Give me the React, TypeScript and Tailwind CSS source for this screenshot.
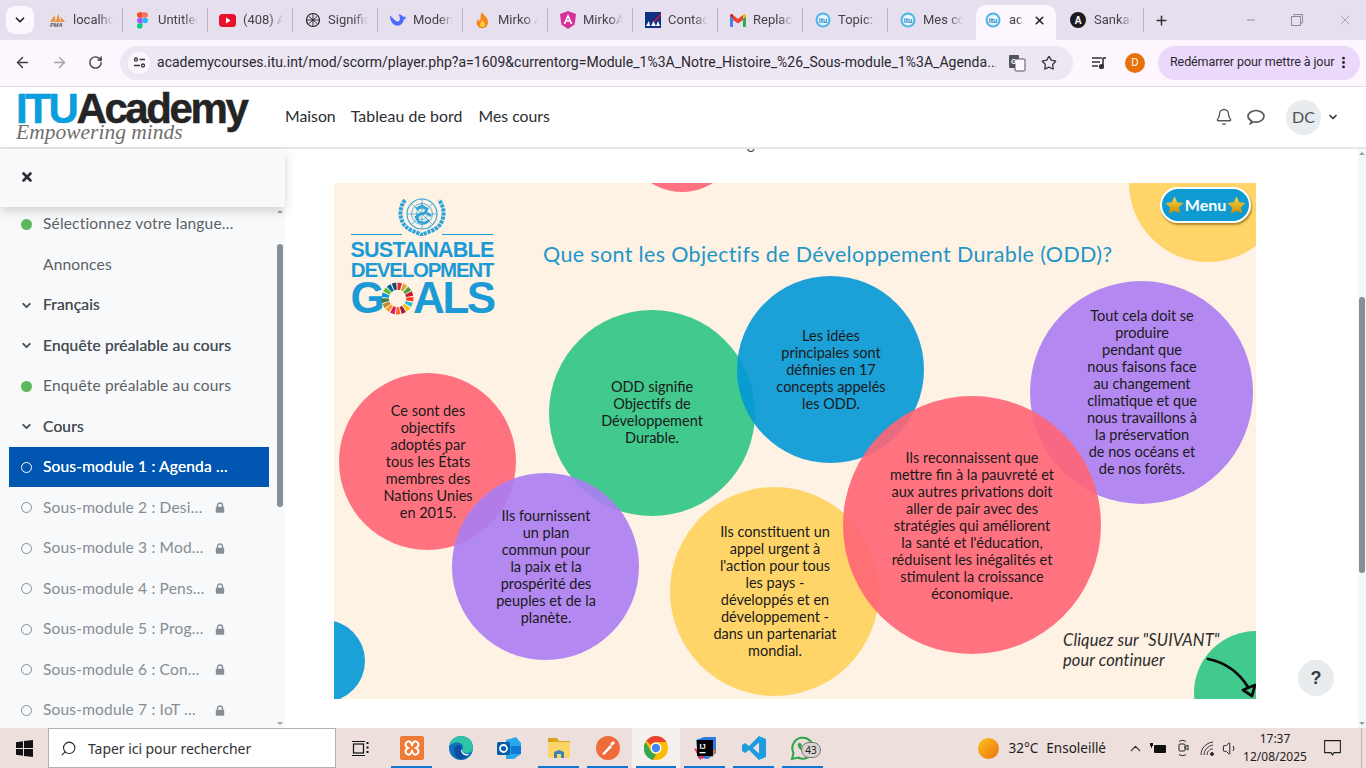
import React from "react";
import { ArrowLeft, ArrowRight, RotateCw, Star, ChevronDown, X, Plus, Minus, Bell, Search, ChevronUp, Volume1, MoreVertical } from "lucide-react";

const Yt = () => (<svg width="17" height="13" viewBox="0 0 17 13"><rect width="17" height="13" rx="3.5" fill="#e8112d" /><path d="M7 3.6v5.8l4.6-2.9z" fill="#fff" /></svg>);
const Pma = () => (<svg width="18" height="16" viewBox="0 0 18 16"><path d="M1 10 6 3l1 7zM7 10l3-9 2 9zM12 10l1-5 4 5z" fill="#e8963a" /><text x="1" y="15.5" fontSize="6" fontWeight="700" fontStyle="italic" fill="#555" fontFamily="Liberation Sans">PMA</text></svg>);
const Figma = () => (<svg width="11" height="17" viewBox="0 0 12 18"><circle cx="9" cy="9" r="3" fill="#1abcfe" /><path d="M0 15a3 3 0 0 1 3-3h3v3a3 3 0 0 1-6 0" fill="#0acf83" /><path d="M0 9a3 3 0 0 1 3-3h3v6H3a3 3 0 0 1-3-3" fill="#a259ff" /><path d="M0 3a3 3 0 0 1 3-3h3v6H3a3 3 0 0 1-3-3" fill="#f24e1e" /><path d="M6 0h3a3 3 0 0 1 0 6H6z" fill="#ff7262" /></svg>);
const Gpt = () => (<svg width="16" height="16" viewBox="0 0 16 16" fill="none" stroke="#222" strokeWidth="1.2"><circle cx="8" cy="8" r="6.5" /><path d="M4 4.5l8 7M12 4.5l-8 7M8 1.5v13M2 8h12" strokeWidth=".9" /></svg>);
const Deep = () => (<svg width="18" height="14" viewBox="0 0 18 14"><path d="M1 2c0 7 4 11 8 11 4 0 6-3 6.500-6L18 5l-1-2-1.500 1C14 2 12 1 10 1c2 3 2 6 .5 7.500C8 9.500 5 6 1 2z" fill="#4d6bfe" /></svg>);
const Flame = () => (<svg width="13" height="17" viewBox="0 0 13 17"><path d="M6 0c1 3 6 5 6 10a5.700 5.700 0 0 1-11.500 1c0-2 1-3 2-4 0 1 .5 2 1.500 2C5 6 4 3 6 0z" fill="#f5871f" /><path d="M6.500 8c.5 2 2.500 3 2.500 5a2.600 2.600 0 0 1-5 0c0-2 2-3 2.500-5z" fill="#ffd23f" /></svg>);
const Ang = () => (<svg width="16" height="18" viewBox="0 0 16 18"><path d="M8 0l8 3-1.300 10.500L8 18l-6.700-4.500L0 3z" fill="#d6309b" /><path d="M8 3 3.500 13h1.700l1-2.300h3.600l1 2.300h1.700zM7 9.200 8 6.800l1 2.400z" fill="#fff" /></svg>);
const Axa = () => (<svg width="16" height="16" viewBox="0 0 16 16"><rect width="16" height="16" fill="#103184" /><path d="M9 9 16 1v2l-6 7z" fill="#e8112d" /><path d="M1 14l3-5 1 5zM6 14l2.500-5 2.500 5zM11 14l2-5 2 5z" fill="#fff" /></svg>);
const Gmail = () => (<svg width="16" height="13" viewBox="0 0 16 13"><path d="M0 2v10a1 1 0 0 0 1 1h2V5z" fill="#4285f4" /><path d="M16 2v10a1 1 0 0 1-1 1h-2V5z" fill="#34a853" /><path d="M3 6V1L8 5l5-4v5L8 9.500z" fill="#ea4335" /><path d="M0 2c0-2 2-2.500 3-1.500V5z" fill="#c5221f" /><path d="M16 2c0-2-2-2.500-3-1.500V5z" fill="#fbbc04" /></svg>);
const Itu = () => (<svg width="16" height="16" viewBox="0 0 16 16"><circle cx="8" cy="8" r="7.500" fill="#49b4e6" /><circle cx="8" cy="8" r="5.500" fill="#e8f5fc" /><text x="8" y="10.500" fontSize="7" fontWeight="700" textAnchor="middle" fill="#1a86c8" fontFamily="Liberation Sans">itu</text></svg>);
const AIcon = () => (<svg width="16" height="16" viewBox="0 0 16 16"><circle cx="8" cy="8" r="8" fill="#1b1b1f" /><text x="8" y="11.500" fontSize="10" fontWeight="700" textAnchor="middle" fill="#fff" fontFamily="Liberation Sans">A</text></svg>);

const tabs: [React.ReactNode, string][] = [
  [<Pma />, "localho"], [<Figma />, "Untitled"], [<Yt />, "(408) A"], [<Gpt />, "Signific"], [<Deep />, "Modern"],
  [<Flame />, "Mirko A"], [<Ang />, "MirkoA"], [<Axa />, "Contact"], [<Gmail />, "Replace"], [<Itu />, "Topic: F"], [<Itu />, "Mes cou"],
];

const fade = "[mask-image:linear-gradient(90deg,#000_65%,transparent)]";

const Tab = ({ icon, label, last }: { icon: React.ReactNode; label: string; last?: boolean }) => (
  <div className={`w-[85px] h-[24px] flex items-center pl-[11px] shrink-0 ${last ? "" : "border-r border-[#b9b3c2]"}`}>
    <span className="w-[17px] flex justify-center shrink-0">{icon}</span>
    <span className={`ml-[7px] w-[40px] overflow-hidden whitespace-nowrap text-[13px] text-[#45424c] font-['Roboto',sans-serif] ${fade}`}>{label}</span>
  </div>
);

const TabBar = () => (
  <div className="h-[40px] bg-[#e6dfee] flex items-end shrink-0">
    <div className="w-[28px] h-[28px] ml-[6px] mb-[6px] bg-[#fdf6fe] rounded-[9px] flex items-center justify-center"><ChevronDown size={14} strokeWidth={3} color="#222" /></div>
    <div className="flex items-center h-[35px] ml-[4px] pb-[5px]">
      {tabs.map(([i, l], n) => <Tab key={n} icon={i} label={l} last={n === tabs.length - 1} />)}
    </div>
    <div className="w-[80px] h-[35px] ml-[3px] bg-[#fdf6fe] rounded-t-[10px] flex items-center pl-[9px] pb-[5px] shrink-0">
      <Itu />
      <span className={`ml-[8px] w-[14px] overflow-hidden text-[13px] text-[#45424c] font-['Roboto',sans-serif] ${fade}`}>aca</span>
      <X size={13} strokeWidth={3} color="#222" className="ml-[10px]" />
    </div>
    <div className="h-[35px] flex items-center pl-[14px] pb-[5px] w-[88px] shrink-0">
      <div className="h-[24px] w-full flex items-center border-r border-[#b9b3c2]">
        <AIcon />
        <span className={`ml-[8px] w-[38px] overflow-hidden whitespace-nowrap text-[13px] text-[#45424c] font-['Roboto',sans-serif] ${fade}`}>Sankadia</span>
      </div>
    </div>
    <div className="h-[35px] flex items-center ml-[10px] pb-[5px]"><Plus size={15} strokeWidth={2.4} color="#333" /></div>
    <div className="h-[40px] flex items-center ml-[76px] gap-[34px] pb-[1px]">
      <Minus size={12} color="#8f8a96" />
      <svg width="12" height="12" viewBox="0 0 12 12" fill="none" stroke="#8f8a96"><rect x=".5" y="2.500" width="9" height="9" /><path d="M3 2.500V.5h8.500V9H9.500" /></svg>
      <X size={16} strokeWidth={1} color="#8f8a96" />
    </div>
  </div>
);

const AddressBar = () => (
  <div className="h-[47px] bg-[#fdf6fe] flex items-center border-b border-[#e3dce8] shrink-0 pb-[1px]">
    <div className="w-[120px] flex items-center pl-[14px] gap-[20px] shrink-0">
      <ArrowLeft size={17} strokeWidth={2} color="#3d3a42" />
      <ArrowRight size={17} strokeWidth={2} color="#a5a1ab" />
      <RotateCw size={15} strokeWidth={2.2} color="#3d3a42" />
    </div>
    <div className="w-[953px] h-[34px] rounded-full bg-[#ece7f2] flex items-center pl-[8px] shrink-0">
      <div className="w-[22px] h-[22px] rounded-full bg-[#fdf6fe] flex items-center justify-center shrink-0">
        <svg width="13" height="13" viewBox="0 0 13 13" fill="none" stroke="#333" strokeWidth="1.300"><circle cx="3" cy="3.500" r="1.500" /><path d="M6.500 3.500H12M1 9.500h6" /><circle cx="10" cy="9.500" r="1.500" /></svg>
      </div>
      <span className="ml-[7px] w-[839px] whitespace-nowrap overflow-hidden text-[14px] text-[#2a282e] font-['Roboto',sans-serif] tracking-[0.02px]">academycourses.itu.int/mod/scorm/player.php?a=1609&amp;currentorg=Module_1%3A_Notre_Histoire_%26_Sous-module_1%3A_Agenda...</span>
      <svg width="18" height="18" viewBox="0 0 18 18" className="ml-[12px] shrink-0"><rect x="1" y="1" width="10" height="13" rx="1" fill="#55525a" /><rect x="7" y="5" width="10" height="12" rx="1" fill="#fdf6fe" stroke="#55525a" /><text x="3" y="10" fontSize="7" fontWeight="700" fill="#fff" fontFamily="Liberation Sans">G</text></svg>
      <Star size={16} strokeWidth={2} color="#3d3a42" className="ml-[15px] shrink-0" />
    </div>
    <svg width="16" height="14" viewBox="0 0 16 14" className="ml-[18px] shrink-0" fill="none" stroke="#333" strokeWidth="1.600"><path d="M1 2h10M1 6h8M1 10h6" /><path d="M12 2v8" /><circle cx="10.500" cy="10.500" r="1.800" fill="#333" /><path d="M12 2h3" /></svg>
    <div className="w-[20px] h-[20px] rounded-full bg-[#e8710a] text-white text-[10px] flex items-center justify-center ml-[18px] shrink-0 font-['Noto_Sans',sans-serif]">D</div>
    <div className="w-[202px] h-[34px] ml-[13px] rounded-full bg-[#ead9fb] flex items-center pl-[12px] shrink-0">
      <span className="text-[12.500px] text-[#2a282e] font-['Roboto',sans-serif] whitespace-nowrap w-[163px] tracking-[-0.1px]">Redémarrer pour mettre à jour</span>
      <MoreVertical size={15} strokeWidth={2.6} color="#222" className="ml-[3px]" />
    </div>
  </div>
);

const SiteNav = () => (
  <div className="h-[62px] bg-white border-b-2 border-[#e5e7ea] flex items-center shrink-0 font-['Lato',sans-serif]">
    <div className="w-[285px] pl-[16px] flex flex-col h-[60px] shrink-0">
      <div className="font-['Liberation_Sans',sans-serif] font-bold text-[42px] leading-[38px] tracking-[-2.4px] mt-[3px] whitespace-nowrap [-webkit-text-stroke:0.5px]"><span className="text-[#0a9fdc]">ITU</span><span className="text-[#242424]">Academy</span></div>
      <div className="font-['Liberation_Serif',serif] italic text-[21.500px] leading-[20px] text-[#6f6f6f] -mt-[6px]">Empowering minds</div>
    </div>
    <div className="flex gap-[16px] text-[15.800px] text-[#2a2d31] pb-[2px]">
      <span>Maison</span><span className="-ml-[1px] tracking-[0.1px]">Tableau de bord</span><span>Mes cours</span>
    </div>
    <div className="ml-auto flex items-center pr-[27px]">
      <Bell size={18} strokeWidth={1.800} color="#55595e" />
      <svg width="18" height="16" viewBox="0 0 18 16" fill="none" stroke="#55595e" strokeWidth="1.700" className="ml-[14px]"><path d="M4.500 11.800C2.300 10.800 1 9.300 1 7.300 1 4.100 4.600 1.500 9 1.500s8 2.600 8 5.800-3.600 5.800-8 5.800c-.9 0-1.800-.1-2.600-.3L3.500 14.500z" /></svg>
      <div className="ml-[21px] w-[35px] h-[35px] rounded-full bg-[#e9ecef] text-[#495057] text-[16px] flex items-center justify-center">DC</div>
      <ChevronDown size={12} strokeWidth={3.500} color="#343a40" className="ml-[6px]" />
    </div>
  </div>
);

const Padlock = () => (
  <svg width="10" height="11" viewBox="0 0 10 11" className="shrink-0"><path d="M2.500 5V3.500a2.500 2.500 0 0 1 5 0V5" fill="none" stroke="#868e96" strokeWidth="1.400" /><rect x=".8" y="4.800" width="8.400" height="6" rx="1" fill="#868e96" /></svg>
);

const Row = ({ mark, children, lock, strong, active }: { mark?: "g" | "c" | "o"; children: React.ReactNode; lock?: boolean; strong?: boolean; active?: boolean }) => (
  <div className={`flex items-center shrink-0 ${active ? "h-[40px] mb-[0.5px] bg-[#0056b0] text-white [text-shadow:0_0_0.4px_#fff]" : lock ? "h-[40.500px] text-[#868c92]" : strong ? "h-[40.500px] text-[#495057] [text-shadow:0_0_0.5px_#495057]" : "h-[40.500px] text-[#5b6167]"}`}>
    <span className="w-[34px] flex justify-center shrink-0">
      {mark === "g" && <span className="w-[11px] h-[11px] rounded-full bg-[#5cb85c]" />}
      {mark === "c" && <ChevronDown size={13} strokeWidth={3.500} color="#495057" />}
      {mark === "o" && <span className={`w-[11px] h-[11px] rounded-full border ${active ? "border-white border-[1.500px]" : "border-[#868c92]"}`} />}
    </span>
    <span className="w-[172px] whitespace-nowrap tracking-[0.18px] pb-[1px]">{children}</span>
    {lock && <Padlock />}
  </div>
);

const Sidebar = () => (
  <div className="w-[285px] bg-[#f8f9fa] flex flex-col shrink-0 font-['Lato',sans-serif] text-[15.500px] h-full">
    <div className="h-[58px] flex items-center pl-[20px] pb-[2px] shrink-0 shadow-[0_4px_10px_rgba(0,0,0,0.16)] z-10 bg-[#f8f9fa]">
      <X size={14} strokeWidth={4.500} color="#2b2d30" />
    </div>
    <div className="flex flex-1 min-h-0">
      <div className="w-[277px] overflow-hidden shrink-0 pl-[9px] pr-[8px]">
        <div className="-mt-[3px] flex flex-col">
          <Row mark="g">Sélectionnez votre langue…</Row>
          <Row>Annonces</Row>
          <Row mark="c" strong>Français</Row>
          <Row mark="c" strong>Enquête préalable au cours</Row>
          <Row mark="g">Enquête préalable au cours</Row>
          <Row mark="c" strong>Cours</Row>
          <Row mark="o" active>Sous-module 1 : Agenda …</Row>
          <Row mark="o" lock>Sous-module 2 : Desi…</Row>
          <Row mark="o" lock>Sous-module 3 : Mod…</Row>
          <Row mark="o" lock>Sous-module 4 : Pens…</Row>
          <Row mark="o" lock>Sous-module 5 : Prog…</Row>
          <Row mark="o" lock>Sous-module 6 : Con…</Row>
          <Row mark="o" lock>Sous-module 7 : IoT …</Row>
        </div>
      </div>
      <div className="w-[6px] flex flex-col items-center">
        <div className="mt-[3px] w-0 h-0 border-x-[3px] border-x-transparent border-b-[3px] border-b-[#9aa0a6]" />
        <div className="mt-[31px] w-[6px] h-[263px] rounded-full bg-[#868e96] shrink-0" />
        <div className="mt-auto mb-[3px] w-0 h-0 border-x-[3px] border-x-transparent border-t-[3px] border-t-[#9aa0a6]" />
      </div>
    </div>
  </div>
);

const sdg = ["#e5243b", "#dda63a", "#4c9f38", "#c5192d", "#ff3a21", "#26bde2", "#fcc30b", "#a21942", "#fd6925", "#dd1367", "#fd9d24", "#bf8b2e", "#3f7e44", "#0a97d9", "#56c02b", "#00689d", "#19486a"];

const Wheel = () => (
  <svg width="33" height="33" viewBox="-17 -17 34 34" className="shrink-0 -mx-[1px]">
    {sdg.map((c, i) => {
      const a = (i / 17) * Math.PI * 2 - Math.PI / 2;
      const b = ((i + 0.78) / 17) * Math.PI * 2 - Math.PI / 2;
      const p = (r: number, t: number) => `${(r * Math.cos(t)).toFixed(2)} ${(r * Math.sin(t)).toFixed(2)}`;
      return <path key={i} d={`M${p(9, a)}L${p(16.500, a)}L${p(16.500, b)}L${p(9, b)}Z`} fill={c} />;
    })}
  </svg>
);

const UN = () => (
  <svg width="50" height="40" viewBox="0 0 50 40" fill="none" stroke="#2ea3da">
    <circle cx="25" cy="18" r="15" strokeWidth="1.100" />
    <circle cx="25" cy="18" r="10.500" strokeWidth=".8" />
    <circle cx="25" cy="18" r="5.500" strokeWidth=".8" />
    <path d="M10 18h30M25 3v30M14.400 7.400l21.200 21.200M35.600 7.400 14.400 28.600" strokeWidth=".7" />
    <path d="M19 13l6-3 5 3-2 4-5 1-4 3 3 5 6 1 4-3M30 17l4 3" strokeWidth="2.600" />
    <path d="M8 4C1 13 2 27 12 33c4 2.500 9 3.500 13 6 4-2.500 9-3.500 13-6 10-6 11-20 4-29" strokeWidth="4" strokeDasharray="3.200 .9" />
  </svg>
);

const Logo = () => (
  <div className="absolute left-[15px] top-[13px] w-[146px] flex flex-col items-center font-['Liberation_Sans',sans-serif] font-bold text-[#1c9ad6]">
    <UN />
    <div className="w-[142px] flex items-center gap-[40px] -mt-[2px]"><span className="h-px flex-1 bg-[#1c9ad6]" /><span className="h-px flex-1 bg-[#1c9ad6]" /></div>
    <div className="text-[21.500px] leading-[20px] mt-[5px] whitespace-nowrap tracking-[-0.75px]">SUSTAINABLE</div>
    <div className="text-[20.500px] leading-[20px] -mt-[0.500px] whitespace-nowrap tracking-[-1.25px]">DEVELOPMENT</div>
    <div className="flex items-center text-[44px] leading-[36px] whitespace-nowrap tracking-[-2.5px] h-[35px] mt-[1px]">G<Wheel /><span>ALS</span></div>
  </div>
);

const circles = [
  "left-[290px] top-[-107px] w-[116px] h-[116px] bg-[#ff6575]",
  "left-[795px] top-[-79px] w-[158px] h-[158px] bg-[#ffd15c]",
  "left-[-51px] top-[437px] w-[82px] h-[82px] bg-[#0298d5]",
  "left-[860px] top-[448px] w-[124px] h-[124px] bg-[#2cc484]",
  "left-[5px] top-[190px] w-[177px] h-[177px] bg-[#ff6575]",
  "left-[215px] top-[127px] w-[206px] h-[206px] bg-[#2cc484]",
  "left-[118px] top-[290px] w-[187px] h-[187px] bg-[#ab7cf1]",
  "left-[403px] top-[93px] w-[187px] h-[187px] bg-[#0298d5]",
  "left-[336px] top-[304px] w-[209px] h-[209px] bg-[#ffd15c]",
  "left-[696px] top-[98px] w-[223px] h-[223px] bg-[#ab7cf1]",
  "left-[509px] top-[213px] w-[258px] h-[258px] bg-[#ff6575]",
];

const texts: { p: string; lines: string[] }[] = [
  { p: "left-[-6px] top-[219px]", lines: ["Ce sont des", "objectifs", "adoptés par", "tous les États", "membres des", "Nations Unies", "en 2015."] },
  { p: "left-[112px] top-[324px]", lines: ["Ils fournissent", "un plan", "commun pour", "la paix et la", "prospérité des", "peuples et de la", "planète."] },
  { p: "left-[218px] top-[195px]", lines: ["ODD signifie", "Objectifs de", "Développement", "Durable."] },
  { p: "left-[397px] top-[144px]", lines: ["Les idées", "principales sont", "définies en 17", "concepts appelés", "les ODD."] },
  { p: "left-[341px] top-[340px]", lines: ["Ils constituent un", "appel urgent à", "l'action pour tous", "les pays -", "développés et en", "développement -", "dans un partenariat", "mondial."] },
  { p: "left-[538px] top-[266px]", lines: ["Ils reconnaissent que", "mettre fin à la pauvreté et", "aux autres privations doit", "aller de pair avec des", "stratégies qui améliorent", "la santé et l'éducation,", "réduisent les inégalités et", "stimulent la croissance", "économique."] },
  { p: "left-[708px] top-[124px]", lines: ["Tout cela doit se", "produire", "pendant que", "nous faisons face", "au changement", "climatique et que", "nous travaillons à", "la préservation", "de nos océans et", "de nos forêts."] },
];

const Gold = () => (
  <svg width="19" height="18" viewBox="0 0 20 19"><defs><linearGradient id="gs" x1="0" y1="0" x2="0" y2="1"><stop offset="0" stopColor="#ffd84a" /><stop offset="1" stopColor="#c98a00" /></linearGradient></defs><path d="M10 .5l2.900 6 6.600.8-4.900 4.500 1.300 6.500L10 15.500 4.100 18.800l1.300-6.500L.5 7.300l6.600-.8z" fill="url(#gs)" /></svg>
);

const Slide = () => (
  <div className="relative w-[922px] h-[516px] bg-[#fdf2e4] overflow-hidden font-['Lato',sans-serif] shrink-0">
    {circles.map((c, i) => <div key={i} className={`absolute rounded-full opacity-90 ${c}`} />)}
    <Logo />
    <div className="absolute left-[209px] top-[57px] text-[#1e96c8] text-[21.500px] leading-[28px] whitespace-nowrap tracking-[0.35px]">Que sont les Objectifs de Développement Durable (ODD)?</div>
    {texts.map((t, i) => (
      <div key={i} className={`absolute w-[200px] text-center text-[14.500px] leading-[17px] text-[#1a1a1a] whitespace-nowrap ${t.p}`}>
        {t.lines.map((l, j) => <div key={j}>{l}</div>)}
      </div>
    ))}
    <div className="absolute left-[826px] top-[4px] w-[91px] h-[36px] rounded-full bg-[#0e9bd2] border-[2px] border-white shadow-[1px_2px_2px_rgba(120,90,0,0.6)] flex items-center justify-center gap-[1px] text-white font-bold text-[16px]">
      <Gold /><span>Menu</span><Gold />
    </div>
    <div className="absolute left-[729px] top-[447px] italic text-[#2d2d2d] text-[16.500px] leading-[20px] tracking-[0.1px] whitespace-nowrap">Cliquez sur "SUIVANT"<br />pour continuer</div>
    <svg width="60" height="50" viewBox="0 0 60 50" className="absolute left-[868px] top-[470px]" fill="none" stroke="#0b0b0b" strokeWidth="2.800" strokeLinecap="round" strokeLinejoin="round">
      <path d="M6 6c15 3 30 12 40 28" />
      <path d="M41 37l12-5-3 11z" />
    </svg>
  </div>
);

const Content = () => (
  <div className="flex-1 relative bg-white flex min-w-0 h-full">
    <div className="flex-1 flex flex-col items-start pl-[49px] min-w-0">
      <div className="h-[34px] overflow-hidden w-full shrink-0 relative">
        <span className="block -mt-[15px] ml-[413px] font-['Lato',sans-serif] text-[15px] leading-[18px] text-[#444]">g</span>
      </div>
      <Slide />
    </div>
    <div className="w-[8px] bg-[#f6f7f8] flex flex-col items-center shrink-0">
      <div className="mt-[3px] w-0 h-0 border-x-[3px] border-x-transparent border-b-[3px] border-b-[#9aa0a6]" />
      <div className="mt-[142px] w-[6px] h-[276px] rounded-full bg-[#868e96] shrink-0" />
      <div className="mt-auto mb-[3px] w-0 h-0 border-x-[3px] border-x-transparent border-t-[3px] border-t-[#9aa0a6]" />
    </div>
    <div className="absolute left-[1013px] top-[511px] w-[36px] h-[36px] rounded-full bg-[#e9ecef] flex items-center justify-center font-bold text-[18px] text-[#343a40] font-['Liberation_Sans',sans-serif]">?</div>
  </div>
);

const Xampp = () => (<svg width="24" height="24" viewBox="0 0 24 24"><rect width="24" height="24" rx="2" fill="#ee7b35" /><path d="M7 6c3-2 4 1 5 3 1-2 2-5 5-3s1 5-1 6c2 1 4 4 1 6s-4-1-5-3c-1 2-2 5-5 3s-1-5 1-6c-2-1-4-4-1-6z" fill="none" stroke="#fff" strokeWidth="2" /></svg>);
const Edge = () => (<svg width="24" height="24" viewBox="0 0 24 24"><circle cx="12" cy="12" r="12" fill="#0f6fc0" /><path d="M12 0c7 0 12 5 12 11.500 0 3.500-2.500 5.500-5.500 5.500-3 0-5-1.500-5-3.500 0-1 .5-1.500.5-2.500C14 8 11 6.500 8 6.500 5 6.500 2 8 .5 10 1.500 4.500 6 0 12 0z" fill="#2ec4a6" /><path d="M5 14c0-3 2-5 4.500-5s3.500 2 3.500 4.500c0 3 3 5.500 7 5-2 3-5 4.500-8.500 4.500C7 23 5 18 5 14z" fill="#0b4f9e" /><path d="M13 13.500c.5 3.500 3.500 5 7 4.500l-1 1.500c-4 .5-7-2-7-5.500z" fill="#d8f3f2" /></svg>);
const Outlook = () => (<svg width="25" height="24" viewBox="0 0 25 24"><path d="M9 4l10-3 5 6v11l-7 5H9z" fill="#28a8ea" /><path d="M14 10h10v8H14z" fill="#0f78d4" /><rect x="0" y="6" width="13" height="13" rx="1.500" fill="#0a5ea8" /><circle cx="6.500" cy="12.500" r="3.500" fill="none" stroke="#fff" strokeWidth="1.800" /></svg>);
const Folder = () => (<svg width="24" height="22" viewBox="0 0 24 22"><path d="M1 1h9l2 3h11v5H1z" fill="#d9a520" /><rect x="1" y="5" width="22" height="16" rx="1" fill="#fcd568" /><path d="M7 21v-6l5-2 5 2v6z" fill="#3c84b8" /><rect x="10" y="17" width="4" height="4" fill="#fcd568" /></svg>);
const Postman = () => (<svg width="24" height="24" viewBox="0 0 24 24"><circle cx="12" cy="12" r="12" fill="#ef6c3a" /><path d="M6 18l8-9 2 2-8 8zM14 8l3-3 2 2-3 3z" fill="#fff" /></svg>);
const Chrome = () => (<svg width="24" height="24" viewBox="0 0 24 24"><circle cx="12" cy="12" r="12" fill="#fbbc04" /><path d="M12 0a12 12 0 0 1 10.400 6H12a6 6 0 0 0-5.200 3L2.400 4.700A12 12 0 0 1 12 0z" fill="#ea4335" /><path d="M1.600 6 6.800 15a6 6 0 0 0 5.200 3L9 24A12 12 0 0 1 1.600 6z" fill="#34a853" /><circle cx="12" cy="12" r="5.500" fill="#fff" /><circle cx="12" cy="12" r="4.200" fill="#4285f4" /></svg>);
const Idea = () => (<svg width="24" height="24" viewBox="0 0 24 24"><path d="M3 4l8-3 12 0v16l-8 6-10-1z" fill="#2a7de1" /><path d="M1 12l6 12 8-6z" fill="#ed2b6a" /><path d="M14 14l9 0-4 8z" fill="#f97a12" /><rect x="4" y="4" width="16" height="16" fill="#000" /><rect x="6.500" y="16" width="6" height="1.300" fill="#fff" /><text x="6.500" y="13" fontSize="7.500" fontWeight="700" fill="#fff" fontFamily="Liberation Sans">IJ</text></svg>);
const VS = () => (<svg width="24" height="24" viewBox="0 0 24 24"><path d="M17 0l7 3v18l-7 3L7 14l-4 3-3-2V9l3-2 4 3zM17 6.500 11 12l6 5.500z" fill="#1f9be0" /></svg>);
const Wa = () => (<svg width="25" height="25" viewBox="0 0 25 25" fill="none" stroke="#2fa54a" strokeWidth="2"><path d="M2 23l1.500-6A10.500 10.500 0 1 1 8 21.500z" /><path d="M8 8c0 4 4 8 8 8l1.500-2-2.500-1.500-1.200 1c-1.500-.5-2.500-1.500-3-3l1-1.200L10 7z" fill="#2fa54a" strokeWidth=".8" /></svg>);

const TB = ({ children, u, active }: { children: React.ReactNode; u?: boolean; active?: boolean }) => (
  <div className={`h-full flex items-center justify-center relative shrink-0 ${active ? "w-[48px] bg-[#f5f0ee]" : "w-[49px]"}`}>
    {children}
    {u && <span className="absolute bottom-0 left-[4px] right-[4px] h-[2px] bg-[#0f78d4]" />}
  </div>
);

const Taskbar = () => (
  <div className="h-[40px] bg-[#ecdfdc] flex items-center shrink-0 font-['Noto_Sans',sans-serif] text-[#1d1d1d]">
    <div className="w-[48px] flex justify-center shrink-0">
      <svg width="17" height="17" viewBox="0 0 17 17" fill="#111"><path d="M0 2.300 7 1.300V8H0zM8 1.100 17 0v8H8zM0 9h7v6.700L0 14.700zM8 9h9v8L8 15.900z" /></svg>
    </div>
    <div className="w-[288px] h-[40px] bg-white border border-[#b5b0ae] flex items-center pl-[11px] shrink-0">
      <Search size={17} strokeWidth={1.500} color="#222" className="-scale-x-100" />
      <span className="ml-[11px] text-[14px] tracking-[-0.05px] text-[#333]">Taper ici pour rechercher</span>
    </div>
    <div className="flex items-center h-full">
      <div className="w-[49px] flex justify-center shrink-0">
        <svg width="17" height="17" viewBox="0 0 17 17" fill="none" stroke="#111" strokeWidth="1.200"><rect x="1.500" y="4" width="10" height="9" /><path d="M0 1.500h13M0 15.500h13" /><path d="M15.500 2v2M15.500 6.500v2M15.500 11v2" strokeWidth="2" /></svg>
      </div>
      <div className="w-[2px]" />
      <TB u><Xampp /></TB>
      <TB><Edge /></TB>
      <TB><Outlook /></TB>
      <TB u><Folder /></TB>
      <TB u><Postman /></TB>
      <TB u active><Chrome /></TB>
      <TB u><Idea /></TB>
      <TB u><VS /></TB>
      <TB u>
        <Wa />
        <span className="absolute left-[23px] top-[14px] w-[20px] h-[16px] rounded-full bg-[#d9d4d2] border border-[#777] text-[10px] leading-[14px] text-center text-[#222]">43</span>
      </TB>
    </div>
    <div className="ml-auto flex items-center h-full">
      <div className="w-[21px] h-[21px] rounded-full bg-gradient-to-br from-[#ffc21a] to-[#e8700f]" />
      <span className="ml-[10px] text-[13.500px] whitespace-nowrap">32°C</span>
      <span className="ml-[8px] text-[13.500px] whitespace-nowrap">Ensoleillé</span>
      <ChevronUp size={17} strokeWidth={1.600} color="#222" className="ml-[21px]" />
      <svg width="16" height="12" viewBox="0 0 16 12" className="ml-[6px]" fill="#111"><rect x="4" y="3" width="12" height="8" rx="1" /><path d="M0 1h3v3H2v2H1V4H0z" /></svg>
      <svg width="13" height="18" viewBox="0 0 13 18" className="ml-[11px]" fill="none" stroke="#222" strokeWidth="1"><rect x="2" y="5" width="6" height="7" rx="1" /><path d="M8 8l3-2v5l-3-2zM2 2.500c2-1.500 5-1.500 7 0M2 15.500c2 1.500 5 1.500 7 0" /></svg>
      <svg width="16" height="15" viewBox="0 0 16 15" className="ml-[9px]" fill="none" stroke="#333" strokeWidth="1"><path d="M2 14C2 7 7 2 14 1M5 14c0-5 4-9 9-10M8 14c0-3 2-6 6-6" /><circle cx="13" cy="13" r="1.500" fill="#222" /></svg>
      <Volume1 size={17} strokeWidth={1.400} color="#222" className="ml-[7px]" />
      <div className="ml-[1px] w-[70px] flex flex-col items-center text-[12px] leading-[18px] shrink-0 mb-[1px]">
        <span>17:37</span><span>12/08/2025</span>
      </div>
      <svg width="17" height="16" viewBox="0 0 17 16" className="ml-[14px]" fill="none" stroke="#222" strokeWidth="1.100"><path d="M.6.6h15.800v12H10l-1.500 2.300-1.500-2.300H.6z" /></svg>
      <div className="ml-[20px] w-[5px] h-full border-l border-[#bdb2b0]" />
    </div>
  </div>
);

export default function App() {
  return (
    <div className="w-[1366px] h-[768px] flex flex-col overflow-hidden bg-white">
      <TabBar />
      <AddressBar />
      <SiteNav />
      <div className="flex-1 flex min-h-0">
        <Sidebar />
        <Content />
      </div>
      <Taskbar />
    </div>
  );
}
